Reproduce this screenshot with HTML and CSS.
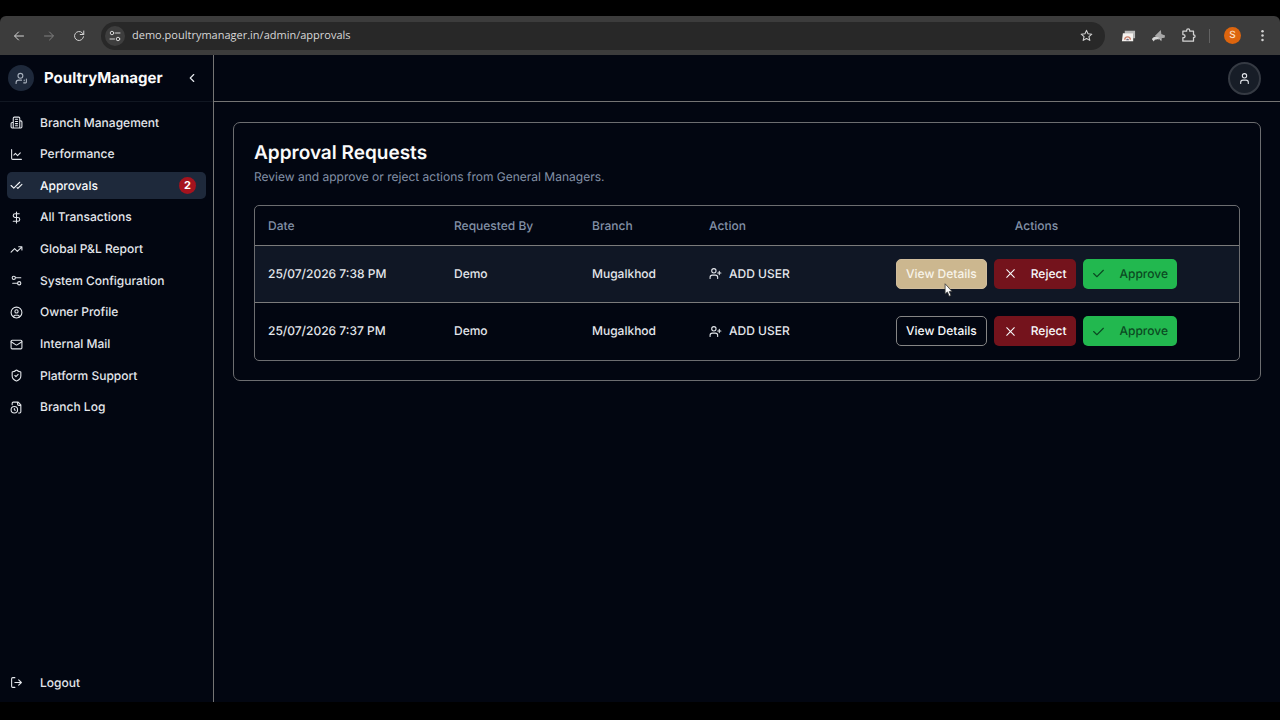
FILE: index.html
```html
<!DOCTYPE html>
<html lang="en">
<head>
<meta charset="utf-8">
<meta name="viewport" content="width=device-width, initial-scale=1">
<title>Approval Requests - PoultryManager</title>
<link rel="stylesheet" href="styles.css">
</head>
<body>
<svg class="sprite" aria-hidden="true">
  <symbol id="user-plus" viewBox="0 0 24 24"><path d="M16 21v-2a4 4 0 0 0-4-4H6a4 4 0 0 0-4 4v2"/><circle cx="9" cy="7" r="4"/><path d="M19 8v6M22 11h-6"/></symbol>
  <symbol id="x" viewBox="0 0 24 24"><path d="M19 5 5 19M5 5l14 14"/></symbol>
  <symbol id="check" viewBox="0 0 24 24"><path d="M21 6 9 18l-6-6"/></symbol>
</svg>

<div class="screen">
  <header class="browser">
    <button class="tool" aria-label="Back"><svg class="icon" viewBox="0 0 24 24"><path d="M21 12H4M11 4l-8 8 8 8"/></svg></button>
    <button class="tool tool-dim" aria-label="Forward"><svg class="icon" viewBox="0 0 24 24"><path d="M3 12h17M13 4l8 8-8 8"/></svg></button>
    <button class="tool" aria-label="Reload"><svg class="icon" viewBox="0 0 24 24"><path d="M21 13.500a9 9 0 1 1-2.500-7.800L21 8.500M21.500 2v7H14.500"/></svg></button>
    <div class="address">
      <button class="site-info" aria-label="View site information"><svg class="icon" viewBox="0 0 24 24"><circle cx="6" cy="6" r="3.500"/><path d="M13 6h9M2 18h9"/><circle cx="18" cy="18" r="3.500"/></svg></button>
      <input class="url" type="text" aria-label="Address" value="demo.poultrymanager.in/admin/approvals">
      <button class="star" aria-label="Bookmark this page"><svg class="icon" viewBox="0 0 24 24"><path d="m12 2.500 2.800 6.400 7 .7-5.300 4.600 1.600 6.800-6.100-3.600L5.900 21l1.600-6.800-5.300-4.600 7-.7z"/></svg></button>
    </div>
    <div class="extensions">
      <button class="tool" aria-label="Screenshot extension"><svg class="art" viewBox="0 0 16 16"><path d="M4 3h11v8h-2V6H4z" fill="#b9b9b9"/><path d="M2 5.500h11V14H1z" fill="#f4f1ee"/><path d="M4 12.500a3 3 0 0 1 6 0" fill="none" stroke="#c9806c" stroke-width="1.500"/><path d="M5.500 13a1.500 1.500 0 0 1 3 0z" fill="#6b6780"/></svg></button>
      <button class="tool" aria-label="Bird extension"><svg class="art" viewBox="0 0 16 16"><path d="M4 8.500 10.500 2l.5 4.500L15 8l-.5 2.500-4 .5-3 1.500L7 10z" fill="#a7a7a7"/><path d="M1 12c1-3 4-3.500 8-1.500L7 12l-3 .5L3 14.500z" fill="#d6d6d6"/><path d="m8 11 3 3 .5-3z" fill="#bdbdbd"/></svg></button>
      <button class="tool" aria-label="Extensions"><svg class="icon" viewBox="0 0 24 24"><path d="M3 5h6V4a2.500 2.500 0 0 1 5 0v1h6v6h.5a2 2 0 0 1 0 4H20v6H3v-5.500h1a2.500 2.500 0 0 0 0-5H3z"/></svg></button>
      <span class="divider"></span>
      <button class="profile" aria-label="Profile">S</button>
      <button class="tool" aria-label="Menu"><svg class="icon dots" viewBox="0 0 24 24"><circle cx="12" cy="5" r="2"/><circle cx="12" cy="12" r="2"/><circle cx="12" cy="19" r="2"/></svg></button>
    </div>
  </header>

  <div class="app">
    <aside class="sidebar">
      <div class="brand">
        <span class="brand-logo"><svg class="icon" viewBox="0 0 24 24"><circle cx="10" cy="7" r="4.500"/><path d="M2 21v-1a5 5 0 0 1 5-5h5"/><path d="M16 20h2M21 13v5a2 2 0 0 1-3 2M17 15v1"/></svg></span>
        <span class="brand-name">PoultryManager</span>
        <button class="collapse" aria-label="Collapse sidebar"><svg class="icon" viewBox="0 0 24 24"><path d="m15 18-6-6 6-6"/></svg></button>
      </div>
      <nav class="nav" aria-label="Main">
        <a class="nav-item" href="#"><svg class="icon" viewBox="0 0 24 24"><path d="M6 22V4a2 2 0 0 1 2-2h8a2 2 0 0 1 2 2v18ZM6 12H4a2 2 0 0 0-2 2v6a2 2 0 0 0 2 2h2M18 9h2a2 2 0 0 1 2 2v9a2 2 0 0 1-2 2h-2M10 6h4M10 10h4M10 14h4M10 18h4"/></svg>Branch Management</a>
        <a class="nav-item" href="#"><svg class="icon" viewBox="0 0 24 24"><path d="M3 3v16a2 2 0 0 0 2 2h16M19 9l-5 5-4-4-3 3"/></svg>Performance</a>
        <a class="nav-item nav-active" href="#" aria-current="page"><svg class="icon" viewBox="0 0 24 24"><path d="M18 6 7 17l-5-5M22 10l-7.500 7.500L13 16"/></svg>Approvals<span class="badge">2</span></a>
        <a class="nav-item" href="#"><svg class="icon" viewBox="0 0 24 24"><path d="M12 2v20M17 5H9.500a3.500 3.500 0 0 0 0 7h5a3.500 3.500 0 0 1 0 7H6"/></svg>All Transactions</a>
        <a class="nav-item" href="#"><svg class="icon" viewBox="0 0 24 24"><path d="m22 7-8.500 8.500-5-5L2 17M16 7h6v6"/></svg>Global P&amp;L Report</a>
        <a class="nav-item" href="#"><svg class="icon" viewBox="0 0 24 24"><path d="M20 7h-9M14 17H5"/><circle cx="17" cy="17" r="3"/><circle cx="7" cy="7" r="3"/></svg>System Configuration</a>
        <a class="nav-item" href="#"><svg class="icon" viewBox="0 0 24 24"><circle cx="12" cy="12" r="10"/><circle cx="12" cy="10" r="3"/><path d="M7 20.700V19a2 2 0 0 1 2-2h6a2 2 0 0 1 2 2v1.700"/></svg>Owner Profile</a>
        <a class="nav-item" href="#"><svg class="icon" viewBox="0 0 24 24"><rect x="2" y="4" width="20" height="16" rx="2"/><path d="m22 7-9 5.700a2 2 0 0 1-2 0L2 7"/></svg>Internal Mail</a>
        <a class="nav-item" href="#"><svg class="icon" viewBox="0 0 24 24"><path d="M20 13c0 5-3.500 7.500-7.700 9a1 1 0 0 1-.6 0C7.500 20.500 4 18 4 13V6a1 1 0 0 1 1-1c2 0 4.500-1.200 6.200-2.700a1.200 1.200 0 0 1 1.600 0C14.500 3.800 17 5 19 5a1 1 0 0 1 1 1zM9 12l2 2 4-4"/></svg>Platform Support</a>
        <a class="nav-item" href="#"><svg class="icon" viewBox="0 0 24 24"><path d="M16 22h2a2 2 0 0 0 2-2V7l-5-5H6a2 2 0 0 0-2 2v3M14 2v4a2 2 0 0 0 2 2h4M8 14v2.200l1.600 1"/><circle cx="8" cy="16" r="6"/></svg>Branch Log</a>
      </nav>
      <button class="nav-item logout"><svg class="icon" viewBox="0 0 24 24"><path d="M9 21H5a2 2 0 0 1-2-2V5a2 2 0 0 1 2-2h4M16 17l5-5-5-5M21 12H9"/></svg>Logout</button>
    </aside>

    <div class="content">
      <header class="topbar">
        <button class="account" aria-label="Account"><svg class="icon" viewBox="0 0 24 24"><path d="M19 21v-2a4 4 0 0 0-4-4H9a4 4 0 0 0-4 4v2"/><circle cx="12" cy="7" r="4"/></svg></button>
      </header>
      <main class="main">
        <section class="card">
          <h1 class="title">Approval Requests</h1>
          <p class="subtitle">Review and approve or reject actions from General Managers.</p>
          <div class="table-frame">
            <table class="table">
              <thead>
                <tr><th class="col-date">Date</th><th class="col-by">Requested By</th><th class="col-branch">Branch</th><th class="col-action">Action</th><th class="col-buttons">Actions</th></tr>
              </thead>
              <tbody>
                <tr class="row-hover">
                  <td>25/07/2026 7:38 PM</td><td>Demo</td><td>Mugalkhod</td>
                  <td><span class="kind"><svg class="icon"><use href="#user-plus"/></svg>ADD USER</span></td>
                  <td><div class="buttons">
                    <span class="pointed"><button class="btn btn-view btn-view-hover">View Details</button><svg class="cursor" viewBox="0 0 12 18" aria-hidden="true"><path d="M1 1v13l3-2.500L6.200 17l2.300-1-2.200-5H10z"/></svg></span>
                    <button class="btn btn-reject"><svg class="icon"><use href="#x"/></svg>Reject</button>
                    <button class="btn btn-approve"><svg class="icon"><use href="#check"/></svg>Approve</button>
                  </div></td>
                </tr>
                <tr>
                  <td>25/07/2026 7:37 PM</td><td>Demo</td><td>Mugalkhod</td>
                  <td><span class="kind"><svg class="icon"><use href="#user-plus"/></svg>ADD USER</span></td>
                  <td><div class="buttons">
                    <button class="btn btn-view">View Details</button>
                    <button class="btn btn-reject"><svg class="icon"><use href="#x"/></svg>Reject</button>
                    <button class="btn btn-approve"><svg class="icon"><use href="#check"/></svg>Approve</button>
                  </div></td>
                </tr>
              </tbody>
            </table>
          </div>
        </section>
      </main>
    </div>
  </div>
</div>
</body>
</html>
```

FILE: styles.css
```css
* { box-sizing: border-box; }

body {
  margin: 0;
  background: #000;
  color: #e4e7ec;
  font: 500 12px/20px Inter, "Liberation Sans", sans-serif;
  text-rendering: geometricPrecision;
}

button, input { font: inherit; color: inherit; text-rendering: inherit; border: 0; margin: 0; padding: 0; background: none; }

.sprite { display: none; }

.icon {
  width: 14px;
  height: 14px;
  flex: none;
  fill: none;
  stroke: currentColor;
  stroke-width: 2;
  stroke-linecap: round;
  stroke-linejoin: round;
}

.screen {
  min-height: 100vh;
  padding: 16px 0 18px;
  display: flex;
  flex-direction: column;
}

/* Browser toolbar */
.browser {
  height: 39px;
  flex: none;
  display: flex;
  align-items: center;
  padding: 0 8px 0 9px;
  background: #3c3c3c;
  border-radius: 6px 6px 0 0;
  color: #d4d4d4;
}

.tool { width: 20px; height: 20px; margin-right: 10px; display: grid; place-items: center; }
.tool .icon { width: 12px; height: 12px; stroke-width: 2; }
.tool .art { width: 15px; height: 15px; }
.tool-dim { color: #808080; }

.address {
  flex: 1;
  min-width: 0;
  height: 28px;
  margin-left: 2px;
  padding: 0 9px 0 4px;
  display: flex;
  align-items: center;
  gap: 7px;
  border-radius: 14px;
  background: #282828;
}
.site-info { width: 20px; height: 20px; border-radius: 10px; background: #3e3e3e; display: grid; place-items: center; }
.site-info .icon { width: 12px; height: 12px; }
.url { flex: 1; min-width: 0; font: 400 11px/20px "Open Sans", "Noto Sans", sans-serif; color: #d6d6d6; }
.star { width: 20px; height: 20px; display: grid; place-items: center; }
.star .icon { width: 13px; height: 13px; }

.extensions { display: flex; align-items: center; margin-left: 13px; }
.extensions .tool:last-child { margin-right: 0; }
.extensions .tool .icon { width: 15px; height: 15px; }
.divider { width: 1px; height: 14px; margin: 0 14px 0 1px; background: #626262; }
.profile { width: 17px; height: 17px; margin-right: 11px; border-radius: 50%; background: #dd650e; color: #fbe0c8; font-size: 10px; line-height: 17px; }
.extensions .dots circle { fill: currentColor; stroke: none; }

/* App shell */
.app { flex: 1; display: flex; background: #020611; }

.sidebar {
  width: 214px;
  flex: none;
  display: flex;
  flex-direction: column;
  border-right: 1px solid #747474;
}

.brand {
  height: 47px;
  flex: none;
  display: flex;
  align-items: center;
  padding: 0 14px 0 8px;
  border-bottom: 1px solid #111722;
}
.brand-logo { width: 26px; height: 26px; border-radius: 50%; background: #1e293b; color: #a9b2be; display: grid; place-items: center; }
.brand-logo .icon { width: 13px; height: 13px; }
.brand-name { flex: 1; margin-left: 10px; font-size: 15px; font-weight: 700; color: #fafafa; }
.collapse { width: 14px; height: 20px; display: grid; place-items: center; }

.nav {
  height: 312px;
  margin: 7px 7px 0;
  display: flex;
  flex-direction: column;
  justify-content: space-between;
}
.nav-item {
  height: 27px;
  padding: 0 10px 0 3px;
  display: flex;
  align-items: center;
  gap: 17px;
  border-radius: 5px;
  color: #e4e7ec;
  text-decoration: none;
}
.nav-item .icon { width: 13px; height: 13px; }
.nav-active { background: #1e293b; color: #f8fafc; }
.badge {
  width: 17px;
  height: 17px;
  margin-left: auto;
  border-radius: 50%;
  background: #a5131e;
  color: #fff;
  font-size: 11px;
  font-weight: 700;
  line-height: 17px;
  text-align: center;
}
.logout { margin: auto 7px 6px; }

.content { flex: 1; min-width: 0; }
.topbar {
  height: 47px;
  display: flex;
  align-items: center;
  justify-content: flex-end;
  padding-right: 19px;
  border-bottom: 1px solid #747474;
}
.account { width: 33px; height: 33px; border: 2px solid #353a43; border-radius: 50%; background: #171d27; display: grid; place-items: center; }
.account .icon { width: 13px; height: 13px; }

.main { padding: 20px 19px; }
.card { padding: 20px 20px 19px; border: 1px solid #6c6d70; border-radius: 7px; }
.title { margin: 0; font-size: 19px; font-weight: 600; line-height: 20px; color: #fafafa; }
.subtitle { margin: 4px 0 18px; font-size: 12px; font-weight: 400; line-height: 20px; color: #8391a7; }

.table-frame { border: 1px solid #6c6d70; border-radius: 5px; overflow: hidden; }
.table { width: 100%; border-collapse: collapse; table-layout: fixed; }
.table th { height: 39px; padding: 1px 13px 0; border-bottom: 1px solid #7b7b7b; text-align: left; font-weight: 500; color: #8391a7; }
.table td { height: 58px; padding: 0 13px; }
.table .row-hover td { height: 57px; border-bottom: 1px solid #7b7b7b; background: #101725; }
.table .col-date { width: 186px; }
.table .col-by { width: 138px; }
.table .col-branch { width: 117px; }
.table .col-action { width: 138px; }
.table .col-buttons { text-align: center; }

.kind { display: flex; align-items: center; gap: 7px; }
.kind .icon { width: 13px; height: 13px; }

.buttons { display: flex; justify-content: center; gap: 7px; }
.btn { height: 30px; padding: 0 9px; display: flex; align-items: center; gap: 14px; border-radius: 5px; }
.btn .icon { width: 13px; height: 13px; }
.btn-view { border: 1px solid #858585; color: #f8fafc; }
.btn-view-hover { border-color: #d0bd9d; background: #ccb78f; color: #f8f4ea; }
.btn-reject { padding: 0 10px; background: #74131c; color: #f8fafc; }
.btn-approve { background: #22b84f; color: #0b4a22; }

/* Mouse pointer over the hovered button */
.pointed { position: relative; }
.cursor { position: absolute; left: 48px; top: 24px; width: 10px; height: 14px; fill: #fff; stroke: #333; }
```
